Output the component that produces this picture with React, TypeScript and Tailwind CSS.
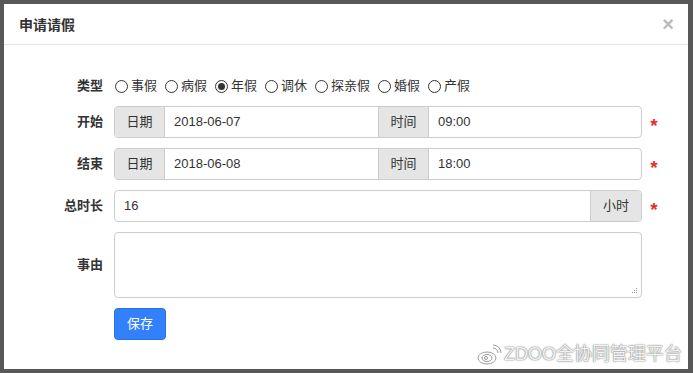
import React from 'react';

const types = ['事假', '病假', '年假', '调休', '探亲假', '婚假', '产假'];

const Radio = ({ label, checked }: { label: string; checked?: boolean }) => (
  <span className="flex items-center mr-[8px]">
    <span className="w-[13px] h-[13px] rounded-full border border-[#333] bg-white flex items-center justify-center mr-[3px]">
      {checked && <span className="w-[7px] h-[7px] rounded-full bg-[#333]" />}
    </span>
    <span>{label}</span>
  </span>
);

const Addon = ({ text, className = '' }: { text: string; className?: string }) => (
  <div className={`h-full flex items-center justify-center bg-[#e5e5e5] text-[#333] border-[#ccc] ${className}`}>
    {text}
  </div>
);

const Star = () => (
  <span className="w-[20px] ml-[2px] text-center text-[#d33] text-[19px] font-bold leading-none pt-[6px]">*</span>
);

const Label = ({ text }: { text: string }) => (
  <div className="w-[110px] pr-[11px] text-right font-bold text-[#333] shrink-0">{text}</div>
);

export default function App() {
  return (
    <div
      className="w-[693px] h-[373px] bg-[#585858] pt-[4px] pl-[4px] relative overflow-hidden text-[13px]"
      style={{ fontFamily: '"Liberation Sans", "Noto Sans CJK SC", sans-serif' }}
    >
      <div className="w-[684px] h-[365px] bg-white">
        {/* header */}
        <div className="h-[41px] border-b border-[#e5e5e5] flex items-center justify-between pl-[15px] pr-[14px]">
          <span className="font-bold text-[14px] text-[#333] pt-[2px]">申请请假</span>
          <span className="text-[#bbb] text-[20px] font-bold leading-none">×</span>
        </div>

        <div className="pt-[31px]">
          {/* type */}
          <div className="flex items-center h-[20px] text-[#333]">
            <Label text="类型" />
            <div className="flex items-center ml-[1px]">
              {types.map((t) => (
                <Radio key={t} label={t} checked={t === '年假'} />
              ))}
            </div>
          </div>

          {/* start / end */}
          {[
            ['开始', '2018-06-07', '09:00'],
            ['结束', '2018-06-08', '18:00'],
          ].map(([l, d, t]) => (
            <div key={l} className="flex items-center mt-[10px]">
              <Label text={l} />
              <div className="flex h-[32px] w-[528px] border border-[#ccc] rounded-[4px] overflow-hidden">
                <Addon text="日期" className="w-[50px] border-r" />
                <div className="w-[214px] flex items-center pl-[9px] text-[#333] border-r border-[#ccc]">{d}</div>
                <Addon text="时间" className="w-[50px] border-r" />
                <div className="flex-1 flex items-center pl-[9px] text-[#333]">{t}</div>
              </div>
              <Star />
            </div>
          ))}

          {/* total */}
          <div className="flex items-center mt-[10px]">
            <Label text="总时长" />
            <div className="flex h-[32px] w-[528px] border border-[#ccc] rounded-[4px] overflow-hidden">
              <div className="flex-1 flex items-center pl-[9px] text-[#333]">16</div>
              <Addon text="小时" className="w-[51px] border-l" />
            </div>
            <Star />
          </div>

          {/* reason */}
          <div className="flex items-center mt-[10px]">
            <Label text="事由" />
            <div className="relative h-[66px] w-[528px] border border-[#ccc] rounded-[4px]">
              <svg className="absolute right-[3px] bottom-[3px]" width="7" height="7" viewBox="0 0 7 7">
                <g fill="#999">
                  <rect x="5" y="1" width="1" height="1" />
                  <rect x="3" y="3" width="1" height="1" />
                  <rect x="5" y="3" width="1" height="1" />
                  <rect x="1" y="5" width="1" height="1" />
                  <rect x="3" y="5" width="1" height="1" />
                  <rect x="5" y="5" width="1" height="1" />
                </g>
              </svg>
            </div>
          </div>

          {/* save */}
          <div className="pl-[110px] mt-[10px]">
            <button className="w-[52px] h-[32px] rounded-[4px] bg-[#3280fc] text-white text-[13px] border border-[#2a6fe0]">
              保存
            </button>
          </div>
        </div>
      </div>

      {/* watermark */}
      <div
        className="absolute left-[476px] top-[341px] flex items-center text-[#f2f2f2] text-[18px]"
        style={{ textShadow: '0 0 2px #888, 0 0 1px #777' }}
      >
        <svg width="26" height="22" viewBox="0 0 26 22" className="mr-[2px]">
          <g fill="none" stroke="#999" strokeWidth="1">
            <ellipse cx="11" cy="14" rx="9" ry="6" />
            <ellipse cx="11" cy="14" rx="5" ry="3.5" />
            <circle cx="10" cy="14" r="1.5" />
            <path d="M17 4 a5 5 0 0 1 5 5" />
            <path d="M17 1 a8 8 0 0 1 8 8" />
          </g>
        </svg>
        <span>ZDOO全协同管理平台</span>
      </div>
    </div>
  );
}
